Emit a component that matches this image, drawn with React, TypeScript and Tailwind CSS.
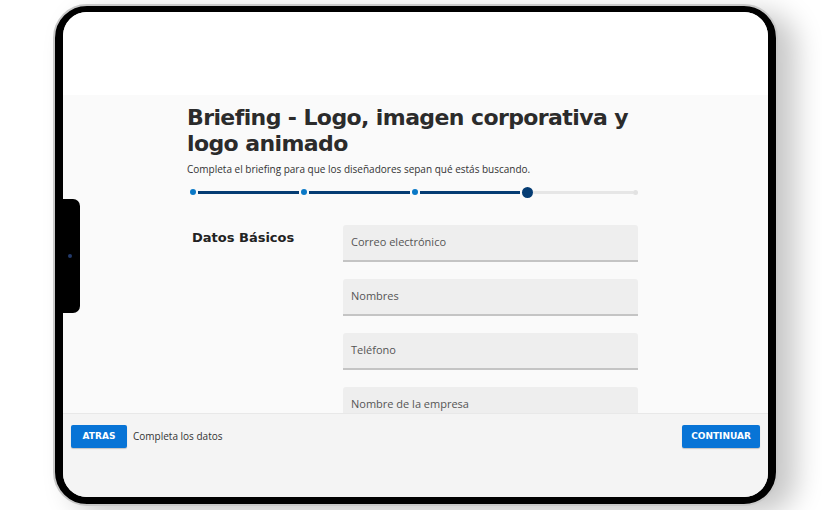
const steps = [
  { kind: "done" },
  { kind: "done" },
  { kind: "done" },
  { kind: "current" },
  { kind: "todo" },
];

const fields = ["Correo electrónico", "Nombres", "Teléfono", "Nombre de la empresa"];

const font = { fontFamily: '"DejaVu Sans", "Open Sans", sans-serif' };
const body = { fontFamily: '"Open Sans", "DejaVu Sans", sans-serif' };

const Progress = () => (
  <div className="flex items-center h-[12px] ml-[3px] w-[448px]">
    {steps.map((s, i) => (
      <div key={i} className={`flex items-center ${i < steps.length - 1 ? "flex-1" : ""}`}>
        {s.kind === "done" && <div className="w-[6px] h-[6px] rounded-full bg-[#0a78c6] shrink-0" />}
        {s.kind === "current" && <div className="w-[11px] h-[11px] rounded-full bg-[#053c73] shrink-0" />}
        {s.kind === "todo" && <div className="w-[5px] h-[5px] rounded-full bg-[#e2e2e2] shrink-0" />}
        {i < steps.length - 1 && (
          <div
            className={`flex-1 h-[3px] ${i < 3 ? "bg-[#053c73] mx-[2px]" : "bg-[#e6e6e6]"}`}
          />
        )}
      </div>
    ))}
  </div>
);

export default function App() {
  return (
    <div className="w-[822px] h-[510px] bg-white overflow-hidden" style={font}>
      <div className="ml-[53px] mt-[4px] w-[725px] h-[502px] rounded-[34px] bg-black border-2 border-[#c9c9c9] pt-[6px] px-[8px] pb-[7px] shadow-[18px_8px_28px_rgba(0,0,0,0.22)]">
        <div className="relative w-full h-full rounded-[24px] overflow-hidden bg-[#fafafa] flex flex-col">
          <div className="h-[83px] bg-white shrink-0" />

          <div className="flex-1 overflow-hidden">
            <div className="ml-[124px] w-[470px] pt-[10px]">
              <h1 className="text-[22px] leading-[26px] font-bold text-[#2b2b2b] tracking-[-0.6px]">
                Briefing - Logo, imagen corporativa y
                <br />
                logo animado
              </h1>
              <p className="mt-[5px] text-[10px] text-[#333]" style={body}>
                Completa el briefing para que los diseñadores sepan qué estás buscando.
              </p>
              <div className="mt-[9px]">
                <Progress />
              </div>

              <div className="flex mt-[27px]">
                <div className="w-[156px] pl-[5px] pt-[3px] text-[13px] font-bold text-[#222]">Datos Básicos</div>
                <div className="flex flex-col gap-[17px] w-[295px]" style={body}>
                  {fields.map((f) => (
                    <div
                      key={f}
                      className="h-[37px] bg-[#eeeeee] rounded-t-[3px] border-b-2 border-[#c4c4c4] flex items-center px-[8px] text-[11px] text-[#555]"
                    >
                      {f}
                    </div>
                  ))}
                </div>
              </div>
            </div>
          </div>

          <div className="h-[84px] shrink-0 bg-[#f4f4f4] border-t border-[#e8e8e8] flex items-start justify-between px-[8px] pt-[11px]">
            <div className="flex items-center gap-[6px]">
              <button className="h-[23px] w-[56px] bg-[#0874d6] rounded-[2px] text-white text-[9px] font-bold shadow-[0_1px_1px_rgba(0,0,0,0.2)]">
                ATRAS
              </button>
              <span className="text-[10px] text-[#333]" style={body}>Completa los datos</span>
            </div>
            <button className="h-[23px] w-[78px] bg-[#0874d6] rounded-[2px] text-white text-[9px] font-bold shadow-[0_1px_1px_rgba(0,0,0,0.2)]">
              CONTINUAR
            </button>
          </div>

          <div className="absolute left-0 top-[187px] w-[17px] h-[114px] bg-black rounded-r-[7px] flex items-center">
            <div className="ml-[5px] w-[4px] h-[4px] rounded-full bg-[#233a6b]" />
          </div>
        </div>
      </div>
    </div>
  );
}
